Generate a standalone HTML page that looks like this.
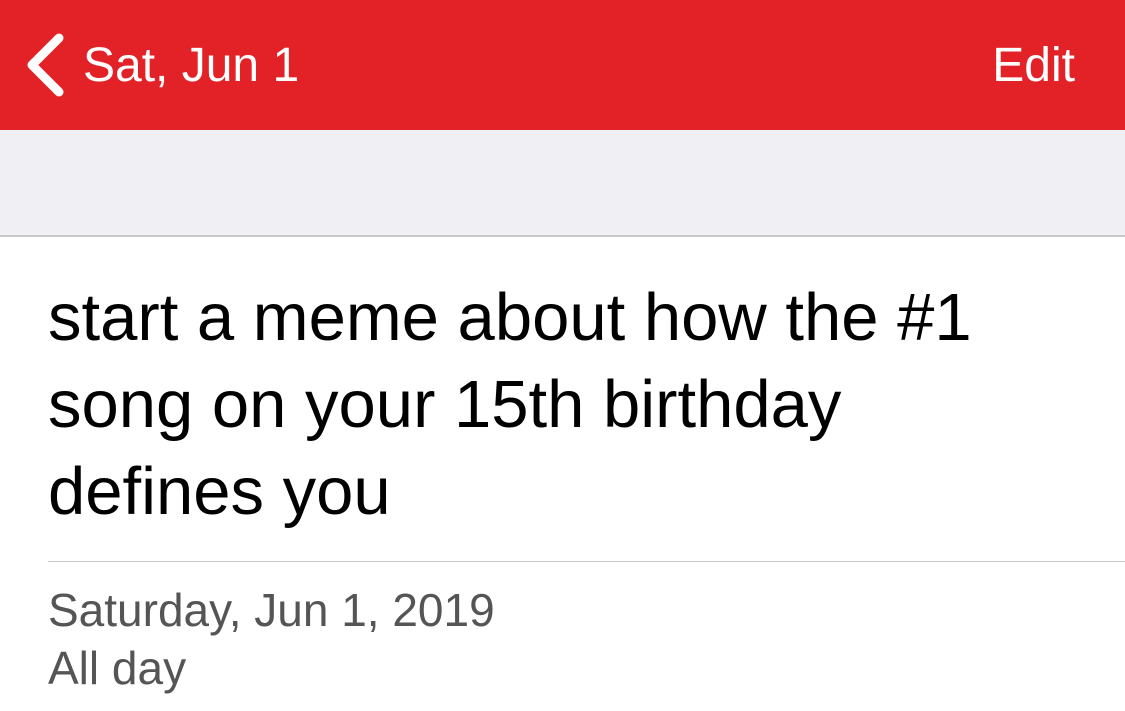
<!DOCTYPE html><html><head><style>
body{margin:0;width:1125px;height:711px;overflow:hidden;background:#fff;font-family:"Liberation Sans",sans-serif;position:relative}
.nav{position:absolute;left:0;top:0;width:1125px;height:130px;background:#e22227}
.gray{position:absolute;left:0;top:130px;width:1125px;height:105px;background:#efeff4;border-bottom:2px solid #c8c7cc}
.t{position:absolute;white-space:nowrap}
</style></head><body>
<div class="nav">
<svg style="position:absolute;left:24px;top:32px" width="44" height="66" viewBox="0 0 44 66"><path d="M35 6 L8 33 L35 60" fill="none" stroke="#fff" stroke-width="9" stroke-linecap="round" stroke-linejoin="round"/></svg>
<div class="t" style="left:83px;top:38px;font-size:48px;color:#fff">Sat, Jun 1</div>
<div class="t" style="right:50px;top:38px;font-size:48px;color:#fff">Edit</div>
</div>
<div class="gray"></div>
<div class="t" style="left:48px;top:274px;font-size:67px;line-height:87px;color:#000">start a meme about how the #1<br>song on your 15th birthday<br>defines you</div>
<div style="position:absolute;left:48px;top:561px;width:1077px;height:1px;background:#c8c7cc"></div>
<div class="t" style="left:48px;top:581px;font-size:46px;line-height:58px;color:#555">Saturday, Jun 1, 2019<br>All day</div>
</body></html>
